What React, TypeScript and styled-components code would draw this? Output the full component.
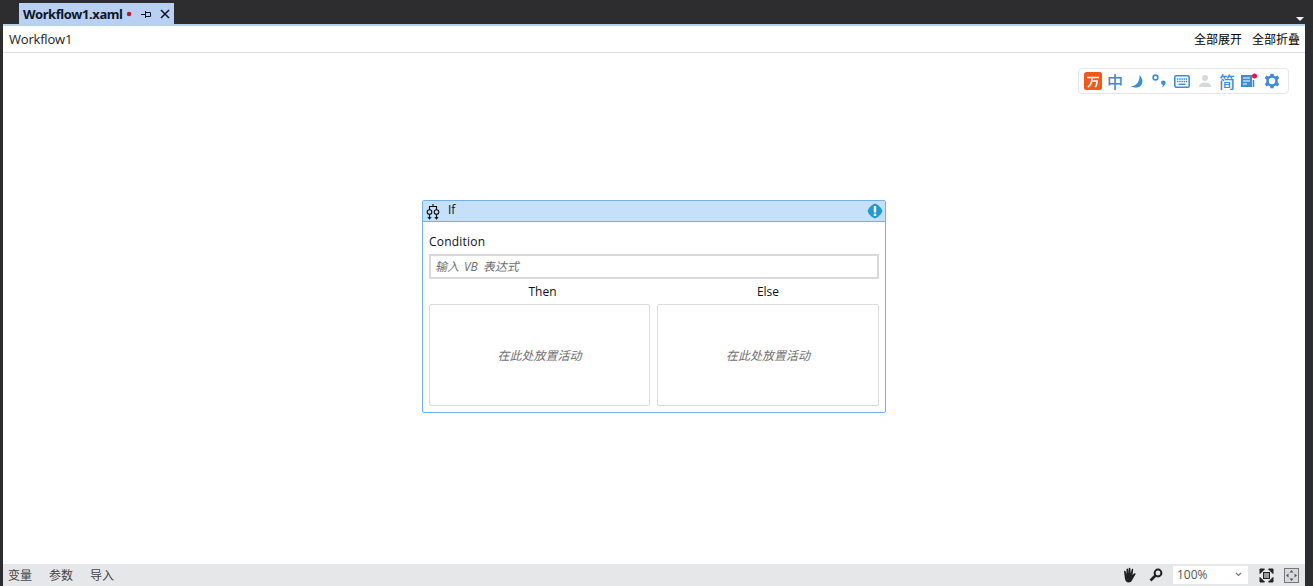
import { createGlobalStyle, styled } from 'styled-components'

const GlobalStyle = createGlobalStyle`
  html, body { margin: 0; padding: 0; background: #2d2d30; }
  body { font-family: "Open Sans", "Noto Sans CJK SC", sans-serif; font-size: 12px; color: #1a1a1a; }
`

const Shell = styled.div`
  width: 1313px;
  height: 586px;
  display: flex;
  flex-direction: column;
  overflow: hidden;
  background: #2d2d30;
`

const TabStrip = styled.div`
  height: 24px;
  flex: none;
  display: flex;
  align-items: flex-end;
  justify-content: space-between;
  padding: 0 9px 0 19px;
`

const Tab = styled.div`
  width: 155px;
  height: 21px;
  box-sizing: border-box;
  padding-left: 4px;
  display: flex;
  align-items: center;
  background: #b9d0f3;
  color: #0e1628;
  font-weight: 700;
  font-size: 13px;
`

const TabName = styled.span`
  font-family: "Noto Sans", sans-serif;
  letter-spacing: -0.4px;
  width: 101px;
  white-space: nowrap;
`

const TabIcons = styled.span`
  display: flex;
  align-items: center;
`

const MenuCaret = styled.div`
  width: 0;
  height: 0;
  margin-bottom: 3px;
  border-left: 4px solid transparent;
  border-right: 4px solid transparent;
  border-top: 4px solid #f1f1f1;
`

const Panel = styled.div`
  flex: 1;
  min-height: 0;
  margin: 0 8px 0 3px;
  display: flex;
  flex-direction: column;
  background: #fff;
  border-top: 2px solid #b4d3ee;
`

const TitleBar = styled.div`
  height: 27px;
  flex: none;
  box-sizing: border-box;
  display: flex;
  align-items: center;
  justify-content: space-between;
  padding: 0 5px 0 6px;
  border-bottom: 1px solid #dedede;
  font-size: 13px;
`

const Crumb = styled.span`
  color: #222;
  letter-spacing: -0.2px;
`

const TitleActions = styled.div`
  display: flex;
  gap: 10px;
  color: #000;
  font-size: 12px;
`

const Canvas = styled.div`
  flex: 1;
  min-height: 0;
  position: relative;
  display: flex;
  align-items: flex-start;
  justify-content: center;
  padding-top: 147px;
  box-sizing: border-box;
`

const ImeBar = styled.div`
  position: absolute;
  top: 15px;
  right: 16px;
  width: 211px;
  height: 26px;
  box-sizing: border-box;
  display: flex;
  align-items: center;
  padding-left: 4px;
  gap: 3px;
  background: #fff;
  border: 1px solid #e4e8ee;
  border-radius: 4px;
`

const ImeSlot = styled.span<{ $color?: string }>`
  position: relative;
  width: 19.4px;
  height: 20px;
  display: flex;
  align-items: center;
  justify-content: center;
  color: ${p => p.$color ?? '#3a8dd6'};
  font-size: 16px;
  font-weight: 500;
  font-family: "Noto Sans CJK SC", sans-serif;
`

const Card = styled.div`
  width: 464px;
  height: 213px;
  box-sizing: border-box;
  border: 1px solid #74b0e6;
  border-radius: 2px;
  display: flex;
  flex-direction: column;
`

const CardHeader = styled.div`
  height: 20px;
  flex: none;
  display: flex;
  align-items: center;
  padding: 0 2px 0 2px;
  background: #c4e0fb;
  border-bottom: 1px solid #74b0e6;
`

const CardTitle = styled.span`
  flex: 1;
  margin-left: 7px;
  padding-bottom: 3px;
  font-size: 12px;
  color: #111;
`

const CardBody = styled.div`
  flex: 1;
  padding: 11px 6px 6px;
  display: flex;
  flex-direction: column;
  font-size: 12px;
  color: #111;
`

const FieldLabel = styled.div`
  height: 17px;
  line-height: 17px;
  letter-spacing: 0.2px;
`

const ExpressionInput = styled.div`
  height: 25px;
  margin-top: 4px;
  box-sizing: border-box;
  border: 2px solid #d9d9d9;
  padding: 0 0 2px 4px;
  display: flex;
  align-items: center;
  font-style: italic;
  color: #6f6f6f;
  font-size: 12px;
  letter-spacing: 0.1px;
  word-spacing: 1.5px;
`

const Branches = styled.div`
  flex: 1;
  display: grid;
  grid-template-columns: 221px 222px;
  column-gap: 7px;
  margin-top: 4px;
`

const Branch = styled.div`
  display: flex;
  flex-direction: column;
  align-items: stretch;
`

const BranchName = styled.div<{ $indent?: number }>`
  height: 17px;
  line-height: 17px;
  text-align: center;
  padding-left: ${p => p.$indent ?? 0}px;
`

const DropZone = styled.div`
  flex: 1;
  margin-top: 4px;
  box-sizing: border-box;
  border: 1px solid #dcdcdc;
  border-radius: 2px;
  display: flex;
  align-items: center;
  justify-content: center;
  font-style: italic;
  color: #6f6f6f;
`

const StatusBar = styled.div`
  height: 22px;
  flex: none;
  display: flex;
  align-items: center;
  justify-content: space-between;
  background: #e6e7e8;
  padding: 0 6px 0 5px;
`

const StatusTabs = styled.div`
  display: flex;
  gap: 17px;
  color: #444;
`

const StatusTools = styled.div`
  display: flex;
  align-items: center;
`

const ToolIcon = styled.svg<{ $gap?: number }>`
  display: block;
  margin-left: ${p => p.$gap ?? 0}px;
`

const ZoomSelect = styled.div`
  width: 75px;
  height: 18px;
  margin-left: 10px;
  box-sizing: border-box;
  padding: 0 6px 1px 4px;
  background: #fff;
  display: flex;
  align-items: center;
  justify-content: space-between;
  color: #555;
`

function IfIcon() {
  return (
    <svg width="16" height="17" viewBox="0 0 16 17" fill="none" stroke="#111" strokeWidth="1.1">
      <path d="M8 3.5V1M4.5 7V3.5H11.5V7" />
      <circle cx="4.5" cy="9" r="2.3" />
      <circle cx="11.5" cy="9" r="2.3" />
      <path d="M4.5 11.3V16M11.5 11.3V16M2.8 14L4.5 16L6.2 14M9.8 14L11.5 16L13.2 14" />
    </svg>
  )
}

function WarnIcon() {
  return (
    <svg width="16" height="16" viewBox="0 0 16 16">
      <path d="M8 .5L11 2L14 5L15.5 8L14 11L11 14L8 15.5L5 14L2 11L.5 8L2 5L5 2Z" fill="#1f9ad6" />
      <rect x="6.8" y="3" width="2.4" height="6.5" fill="#fff" />
      <rect x="6.8" y="10.6" width="2.4" height="2.4" fill="#fff" />
    </svg>
  )
}

function ImeIcons() {
  return (
    <>
      <ImeSlot>
        <svg width="18" height="18" viewBox="0 0 18 18">
          <rect width="18" height="18" rx="2.5" fill="#f4581c" />
          <path d="M3 5.5H15M8 5.5C8 10 7 13 4 15M7.5 9H13C13 12 12.5 14 11 15" fill="none" stroke="#fff" strokeWidth="1.6" />
        </svg>
      </ImeSlot>
      <ImeSlot>中</ImeSlot>
      <ImeSlot>
        <svg width="15" height="15" viewBox="0 0 15 15">
          <path d="M9.5 1C12.5 4 13.5 8.5 11 11.5C8.5 14.3 4 14 1 12C5 12.5 10 9 9.5 1Z" fill="#3a8dd6" />
        </svg>
      </ImeSlot>
      <ImeSlot>
        <svg width="15" height="15" viewBox="0 0 15 15">
          <circle cx="3.5" cy="3.5" r="2.4" fill="none" stroke="#3a8dd6" strokeWidth="1.6" />
          <path d="M11.2 6.5C14.6 6.5 14.8 10.8 9.8 13.5C10.8 12 11 11.2 11 10.8C8.2 10.2 8.6 6.5 11.2 6.5Z" fill="#3a8dd6" />
        </svg>
      </ImeSlot>
      <ImeSlot>
        <svg width="16" height="13" viewBox="0 0 16 13" fill="none">
          <rect x=".8" y=".8" width="14.4" height="11.4" rx="1.5" stroke="#3a8dd6" strokeWidth="1.6" />
          <path d="M3 4H13M3 6.5H13" stroke="#3a8dd6" strokeWidth="1.4" strokeDasharray="1.5 .7" />
          <path d="M4.5 9.3H11.5" stroke="#3a8dd6" strokeWidth="1.4" />
        </svg>
      </ImeSlot>
      <ImeSlot>
        <svg width="14" height="14" viewBox="0 0 14 14" fill="#d6d8da">
          <circle cx="7" cy="4" r="3" />
          <path d="M1 13C1 9.5 4 8.5 7 8.5S13 9.5 13 13Z" />
        </svg>
      </ImeSlot>
      <ImeSlot>简</ImeSlot>
      <ImeSlot>
        <svg width="18" height="16" viewBox="0 0 18 16">
          <path d="M1 2H12V14H1Z" fill="#3a8dd6" />
          <path d="M3 5H10M3 8H10M3 11H7" stroke="#fff" strokeWidth="1.2" />
          <path d="M13.5 7V14" stroke="#3a8dd6" strokeWidth="1.6" />
          <circle cx="14.5" cy="3" r="2.5" fill="#e8153c" />
        </svg>
      </ImeSlot>
      <ImeSlot>
        <svg width="16" height="16" viewBox="0 0 16 16">
          <path d="M6.5 .8H9.5L10 2.7L11.8 3.5L13.5 2.5L15.2 5.1L13.7 6.5V9.5L15.2 10.9L13.5 13.5L11.8 12.5L10 13.3L9.5 15.2H6.5L6 13.3L4.2 12.5L2.5 13.5L.8 10.9L2.3 9.5V6.5L.8 5.1L2.5 2.5L4.2 3.5L6 2.7Z" fill="#3a8dd6" />
          <circle cx="8" cy="8" r="3.2" fill="#fff" />
        </svg>
      </ImeSlot>
    </>
  )
}

function App() {
  const statusTabs = ['变量', '参数', '导入']
  const branches = [{ name: 'Then', indent: 6 }, { name: 'Else', indent: 0 }]

  return (
    <Shell>
      <GlobalStyle />
      <TabStrip>
        <Tab>
          <TabName>Workflow1.xaml</TabName>
          <TabIcons>
            <svg width="48" height="12" viewBox="0 0 48 12">
              <circle cx="5" cy="6" r="2.2" fill="#c8102e" />
              <path d="M17 6.5H21M21.5 3V10M21.5 4.5H26.5V8.5H21.5" fill="none" stroke="#0e1628" strokeWidth="1" />
              <path d="M37 2L45 10M45 2L37 10" stroke="#0e1628" strokeWidth="1.6" />
            </svg>
          </TabIcons>
        </Tab>
        <MenuCaret />
      </TabStrip>
      <Panel>
        <TitleBar>
          <Crumb>Workflow1</Crumb>
          <TitleActions>
            <span>全部展开</span>
            <span>全部折叠</span>
          </TitleActions>
        </TitleBar>
        <Canvas>
          <ImeBar>
            <ImeIcons />
          </ImeBar>
          <Card>
            <CardHeader>
              <IfIcon />
              <CardTitle>If</CardTitle>
              <WarnIcon />
            </CardHeader>
            <CardBody>
              <FieldLabel>Condition</FieldLabel>
              <ExpressionInput>输入 VB 表达式</ExpressionInput>
              <Branches>
                {branches.map(({ name, indent }) => (
                  <Branch key={name}>
                    <BranchName $indent={indent}>{name}</BranchName>
                    <DropZone>在此处放置活动</DropZone>
                  </Branch>
                ))}
              </Branches>
            </CardBody>
          </Card>
        </Canvas>
        <StatusBar>
          <StatusTabs>
            {statusTabs.map(name => <span key={name}>{name}</span>)}
          </StatusTabs>
          <StatusTools>
            <ToolIcon width="16" height="16" viewBox="0 0 16 16" fill="#222">
              <path d="M3 4.5C3 3.5 4.5 3.5 4.7 4.5L5.5 7V2.5C5.5 1.3 7 1.3 7.2 2.5L7.7 6.5V1.5C7.7 .4 9.3 .4 9.4 1.5L9.7 6.5L10.7 2.5C11 1.4 12.4 1.8 12.2 3L11.5 8L13 6.5C14 5.6 15.2 6.6 14.4 7.6L11.5 12.5C10.8 14.5 9.5 15.5 7.5 15.5C5.5 15.5 4.5 14 4 12Z" />
            </ToolIcon>
            <ToolIcon $gap={12} width="14" height="14" viewBox="0 0 14 14" fill="none" stroke="#222">
              <circle cx="9" cy="5" r="3.4" strokeWidth="2" />
              <path d="M6.5 7.5L1.5 12.5" strokeWidth="2.6" />
            </ToolIcon>
            <ZoomSelect>
              <span>100%</span>
              <svg width="7" height="5" viewBox="0 0 7 5" fill="none" stroke="#777" strokeWidth="1.2">
                <path d="M1 1L3.5 3.5L6 1" />
              </svg>
            </ZoomSelect>
            <ToolIcon $gap={11} width="15" height="15" viewBox="0 0 15 15" fill="none" stroke="#222">
              <rect x="4.5" y="4.5" width="6" height="6" fill="#999" />
              <path d="M1 5.5V1H5.5ZM14 5.5V1H9.5ZM1 9.5V14H5.5ZM14 9.5V14H9.5Z" fill="#222" />
            </ToolIcon>
            <ToolIcon $gap={10} width="15" height="15" viewBox="0 0 15 15" fill="#556">
              <rect x=".5" y=".5" width="14" height="14" fill="#d8d9da" stroke="#777" />
              <path d="M7.5 2L9.5 4.5H5.5ZM7.5 13L5.5 10.5H9.5ZM2 7.5L4.5 5.5V9.5ZM13 7.5L10.5 9.5V5.5Z" />
            </ToolIcon>
          </StatusTools>
        </StatusBar>
      </Panel>
    </Shell>
  )
}

export default App
